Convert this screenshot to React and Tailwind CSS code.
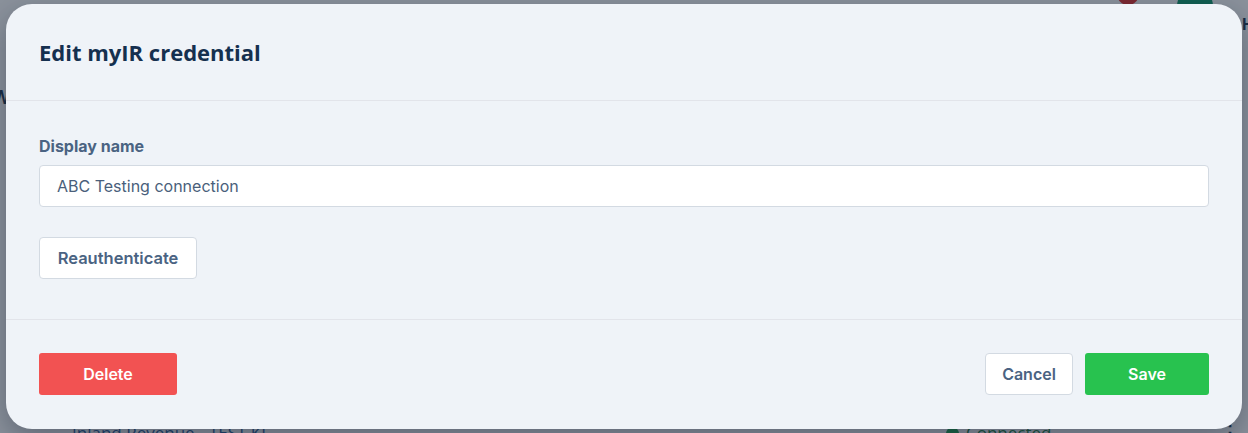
import React from "react";

export default function App() {
  return (
    <div className="relative w-[1248px] h-[433px] overflow-hidden bg-[#f8fafc] font-['Inter',sans-serif]">
      {/* Page behind the dialog */}
      <div className="absolute inset-0">
        <div className="absolute left-[1117px] top-[-17px] w-[22px] h-[22px] rounded-full bg-[#dc2626]" />
        <div className="absolute left-[1177px] top-[-12px] w-[36px] h-[36px] rounded-full bg-[#059669]" />
        <div className="absolute left-[1242px] top-[12px] text-[16px] font-bold text-[#15304f]">H</div>
        <div className="absolute left-[-8px] top-[84px] text-[18px] font-semibold text-[#15304f]">W</div>
        <div className="absolute left-[72px] top-[420px] text-[17px] text-[#1e5a9a] font-['Open_Sans',sans-serif]">Inland Revenue - TEST KF</div>
        <div className="absolute left-[946px] top-[420px] flex items-center gap-[7px] text-[17px] text-[#15803d] font-['Open_Sans',sans-serif]">
          <span className="w-[13px] h-[13px] rounded-full bg-[#16a34a] mt-[2px]" />
          <span>Connected</span>
        </div>
        <div className="absolute left-[1221px] top-[418px] text-[18px] font-bold text-[#15304f]">⋮</div>
      </div>
      {/* Overlay */}
      <div className="absolute inset-0 bg-[rgba(30,41,59,0.5)]" />
      {/* Dialog */}
      <div className="absolute left-[6px] top-[4px] w-[1236px] h-[425px] rounded-[26px] bg-[#eff3f8] shadow-[0_10px_30px_rgba(15,23,42,0.35)] flex flex-col">
        <div className="h-[97px] shrink-0 border-b border-[#e2e4ea] px-[33px] flex items-center">
          <h2 className="text-[22px] font-bold text-[#15304f] font-['Open_Sans',sans-serif] leading-none">
            Edit myIR credential
          </h2>
        </div>
        <div className="h-[218px] shrink-0 px-[33px] pt-[35px] flex flex-col items-start">
          <label className="h-[20px] leading-[20px] text-[16px] font-bold text-[#4a6382]">Display name</label>
          <div className="mt-[9px] w-full h-[42px] rounded-[4px] border border-[#d3dae2] bg-white flex items-center px-[17px] text-[16px] text-[#4a5f7b]">
            ABC Testing connection
          </div>
          <button className="mt-[30px] h-[42px] w-[158px] rounded-[4px] border border-[#d3dae2] bg-white text-[16.5px] font-semibold text-[#4a6382] flex items-center justify-center">
            Reauthenticate
          </button>
        </div>
        <div className="flex-1 border-t border-[#e2e4ea] px-[33px] pt-[33px] flex items-start justify-between">
          <button className="h-[42px] w-[138px] rounded-[3px] bg-[#f25252] text-white text-[16px] font-semibold">
            Delete
          </button>
          <div className="flex gap-[12px]">
            <button className="h-[42px] w-[88px] rounded-[4px] border border-[#d3dae2] bg-white text-[16px] font-semibold text-[#4a6382]">
              Cancel
            </button>
            <button className="h-[42px] w-[124px] rounded-[3px] bg-[#28c24f] text-white text-[16px] font-semibold">
              Save
            </button>
          </div>
        </div>
      </div>
    </div>
  );
}
